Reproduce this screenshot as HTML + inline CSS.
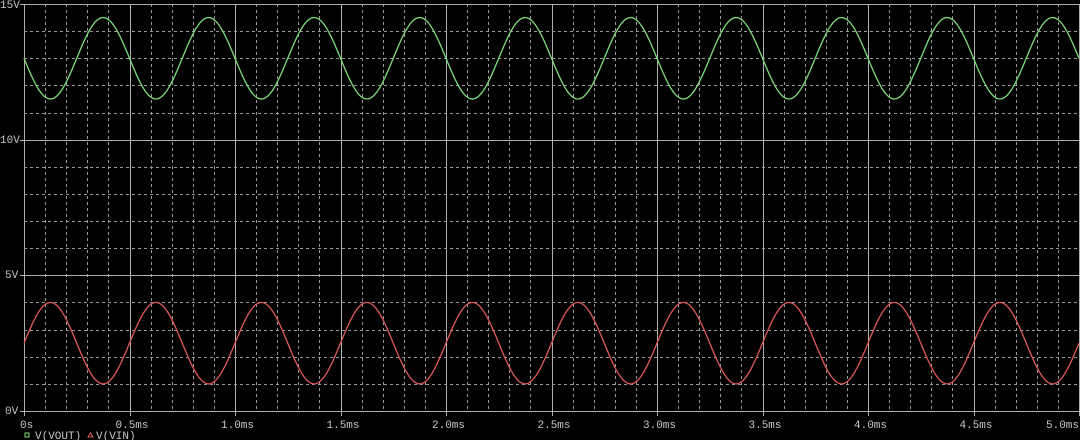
<!DOCTYPE html>
<html><head><meta charset="utf-8"><style>
html,body{margin:0;padding:0;background:#000;width:1080px;height:440px;overflow:hidden}
svg{display:block}
text{font-family:"Liberation Mono",monospace;font-size:11px;fill:#c8c8c8}
</style></head><body>
<svg id="s" width="1080" height="440" xmlns="http://www.w3.org/2000/svg">
<g id="grid"></g>
<path id="g" fill="none" stroke="#7ee07a" stroke-width="1.3"/>
<path id="r" fill="none" stroke="#e05a5a" stroke-width="1.3"/>
<text x="0" y="8">15V</text>
<text x="0" y="143">10V</text>
<text x="5" y="278">5V</text>
<text x="5" y="414">0V</text>
<g id="xl"></g>
<rect x="25" y="433" width="4" height="4" fill="none" stroke="#7ee07a" stroke-width="1"/>
<text x="35" y="439">V(VOUT)</text>
<path d="M88 437 L90.5 433 L93 437 Z" fill="none" stroke="#e05a5a" stroke-width="1"/>
<text x="96" y="439">V(VIN)</text>
</svg>
<script>
var X0=24,X1=1079,Y15=4,Y0=411;
var px=(X1-X0)/5, py=(Y0-Y15)/15;
var ns="http://www.w3.org/2000/svg",grid=document.getElementById('grid'),xl=document.getElementById('xl');
function line(x1,y1,x2,y2,dash,col){var l=document.createElementNS(ns,'line');l.setAttribute('x1',x1);l.setAttribute('y1',y1);l.setAttribute('x2',x2);l.setAttribute('y2',y2);l.setAttribute('stroke',col);l.setAttribute('stroke-width',1);if(dash)l.setAttribute('stroke-dasharray','3,3');grid.appendChild(l);}
for(var i=0;i<=50;i++){var x=Math.round(X0+i*px/10)+0.5;if(i%5==0)line(x,Y15,x,Y0+5,false,'#b0b0b0');else line(x,Y15,x,Y0,true,'#999');}
for(var v=0;v<=15;v++){var y=Math.round(Y0-v*py)+0.5;if(v%5==0)line(X0-4,y,X1,y,false,'#b0b0b0');else line(X0,y,X1,y,true,'#999');}
var labs=['0s','0.5ms','1.0ms','1.5ms','2.0ms','2.5ms','3.0ms','3.5ms','4.0ms','4.5ms','5.0ms'];
for(var i=0;i<=10;i++){var t=document.createElementNS(ns,'text');var x=X0+i*px/2;t.setAttribute('x',i==0?20:(i==10?1046:x-14));t.setAttribute('y',428);t.textContent=labs[i];xl.appendChild(t);}
var dg='',dr='';
for(var x=X0;x<=X1;x+=1){var t=(x-X0)/px;var s=Math.sin(2*Math.PI*2*t);
var vg=13-1.5*s, vr=2.5+1.5*s;
dg+=(x==X0?'M':'L')+x+' '+(Y0-vg*py).toFixed(2);dr+=(x==X0?'M':'L')+x+' '+(Y0-vr*py).toFixed(2);}
document.getElementById('g').setAttribute('d',dg);document.getElementById('r').setAttribute('d',dr);
</script>
</body></html>
